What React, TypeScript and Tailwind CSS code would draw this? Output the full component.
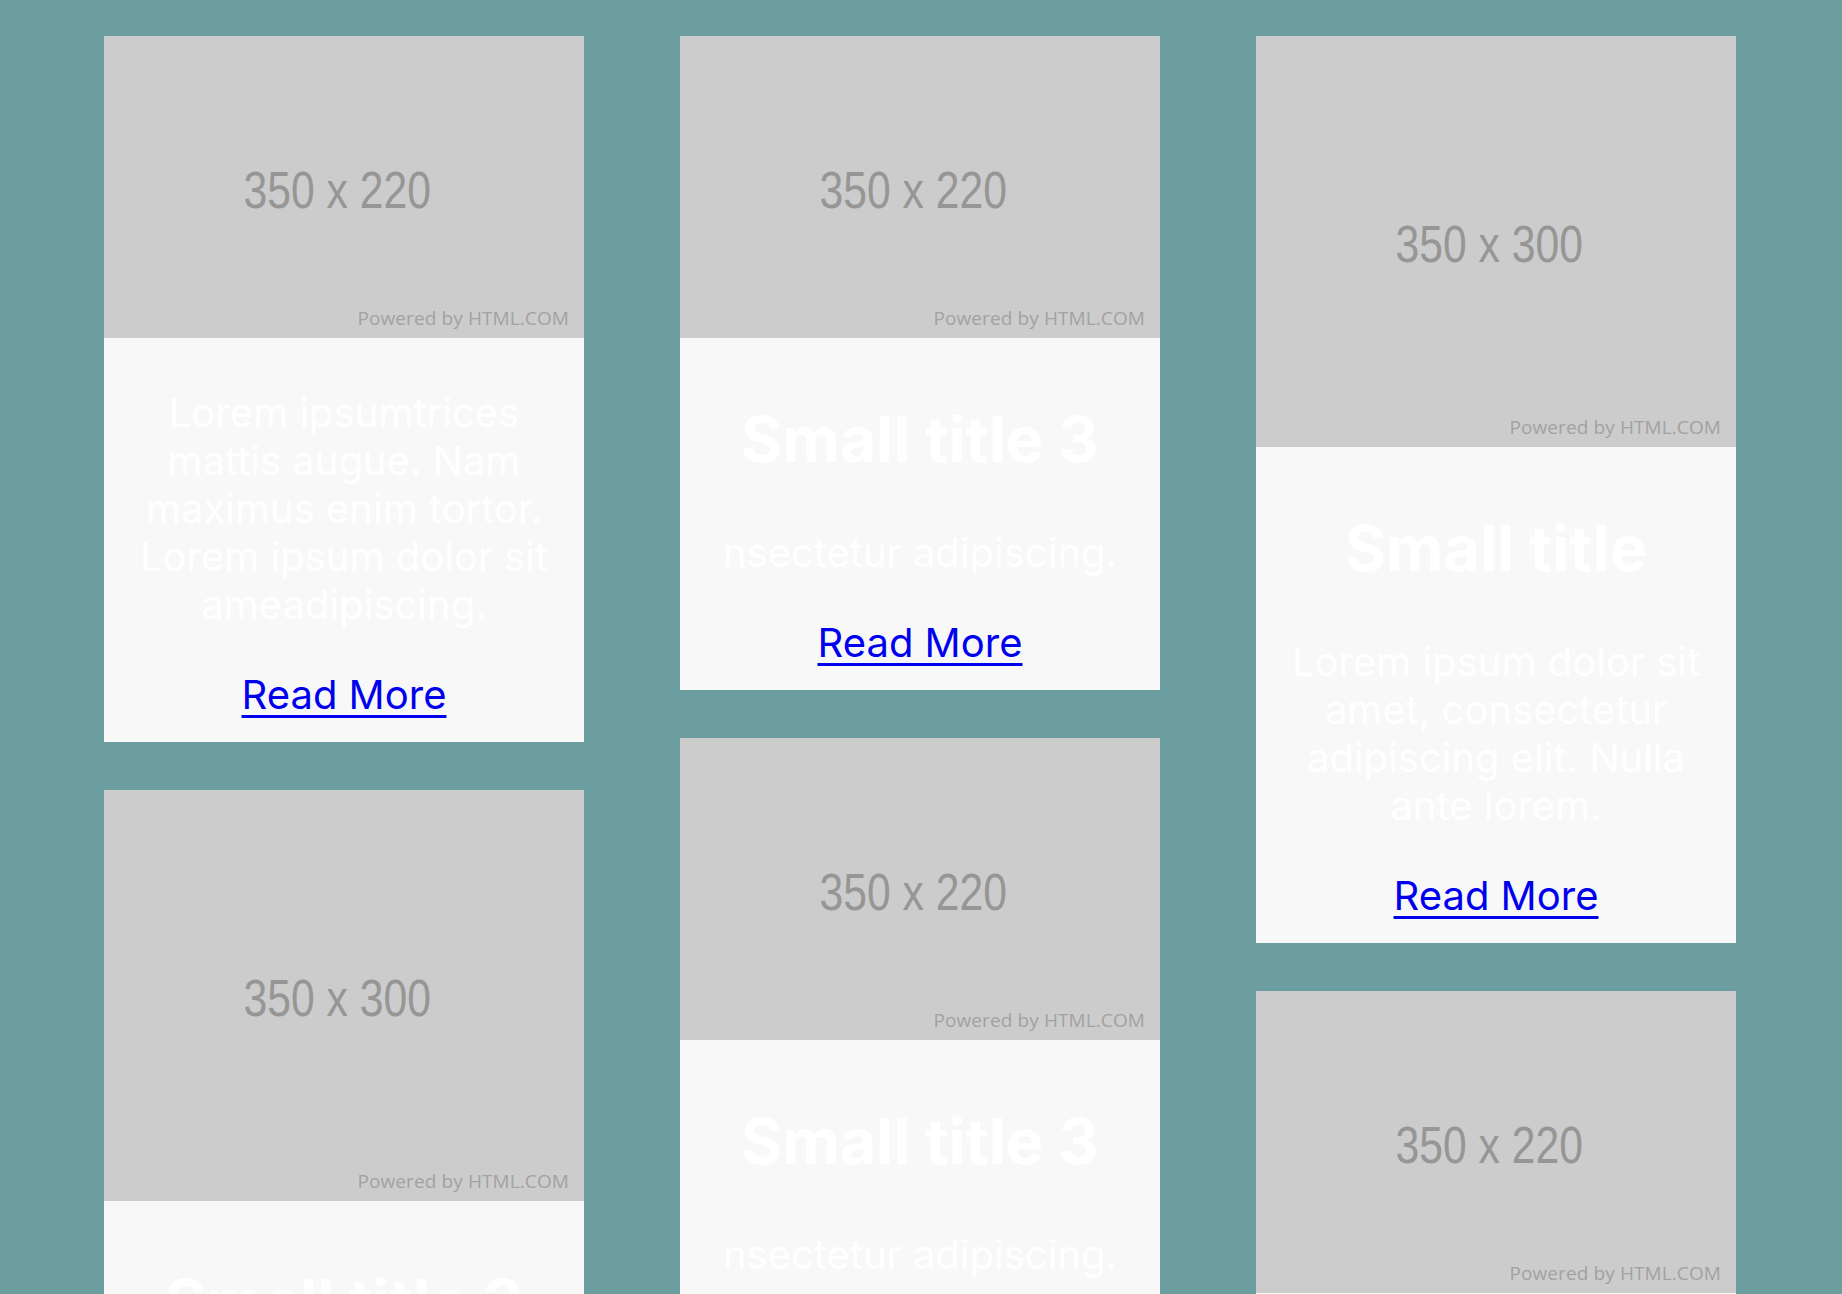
import React from 'react';

interface CardData {
  height: number;
  label: string;
  title?: string;
  text: string;
}

const columns: CardData[][] = [
  [
    {
      height: 302,
      label: '350 x 220',
      text: 'Lorem ipsumtrices mattis augue. Nam maximus enim tortor. Lorem ipsum dolor sit ameadipiscing.',
    },
    { height: 411, label: '350 x 300', title: 'Small title 3', text: 'nsectetur adipiscing.' },
  ],
  [
    { height: 302, label: '350 x 220', title: 'Small title 3', text: 'nsectetur adipiscing.' },
    { height: 302, label: '350 x 220', title: 'Small title 3', text: 'nsectetur adipiscing.' },
  ],
  [
    {
      height: 411,
      label: '350 x 300',
      title: 'Small title',
      text: 'Lorem ipsum dolor sit amet, consectetur adipiscing elit. Nulla ante lorem.',
    },
    { height: 302, label: '350 x 220', title: 'Small title 3', text: 'nsectetur adipiscing.' },
  ],
];

const Placeholder: React.FC<{ height: number; label: string }> = ({ height, label }) => (
  <div className="relative flex items-center justify-center bg-[#cccccc]" style={{ height }}>
    <span className="mt-[5px] mr-[13px] scale-x-[0.82] font-['Liberation_Sans',Arial,sans-serif] text-[52px] leading-none text-[#969696]">
      {label}
    </span>
    <span className="absolute right-[15px] bottom-[8px] font-['Open_Sans',sans-serif] text-[19px] leading-[24px] tracking-[0.1px] text-[#a2a2a2]">
      Powered by HTML.COM
    </span>
  </div>
);

const Card: React.FC<{ card: CardData }> = ({ card }) => (
  <div className="flex flex-col bg-[#f8f8f8]">
    <Placeholder height={card.height} label={card.label} />
    <div className="flex flex-col items-center px-8 pb-[23px] text-center font-['Inter',sans-serif] text-white">
      {card.title && (
        <h2 className="mt-[65px] text-[63px] leading-[72px] font-bold">{card.title}</h2>
      )}
      <p className={`${card.title ? 'mt-[54px]' : 'mt-[51px]'} text-[40px] leading-[48px]`}>{card.text}</p>
      <a href="#" className="mt-[42px] text-[40px] leading-[48px] text-[#0000ee] underline decoration-[3px] underline-offset-[6px]">
        Read More
      </a>
    </div>
  </div>
);

export default function App() {
  return (
    <div className="h-screen overflow-hidden bg-[#6c9ea0]">
      <div className="ml-[104px] grid w-[1632px] grid-cols-3 gap-x-[96px] pt-[36px]">
        {columns.map((col, i) => (
          <div key={i} className="flex flex-col gap-[48px]">
            {col.map((card, j) => (
              <Card key={j} card={card} />
            ))}
          </div>
        ))}
      </div>
    </div>
  );
}
